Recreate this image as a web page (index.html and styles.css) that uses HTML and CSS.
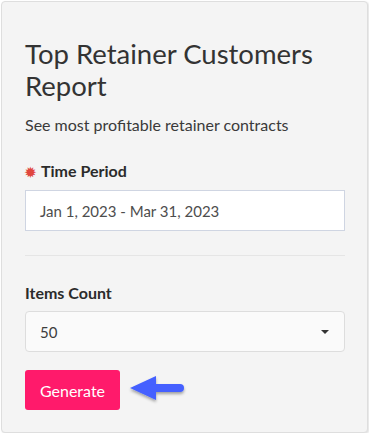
FILE: index.html
```html
<!DOCTYPE html>
<html lang="en">
<head>
    <meta name="viewport" content="width=device-width, initial-scale=1.0" />
    <title>Top Retainer Customers Report</title>
    <link rel="stylesheet" href="styles.css">
</head>
<body>
    <div class="card">
        <h1 class="title">Top Retainer Customers Report</h1>
        <p class="subtitle">See most profitable retainer contracts</p>

        <div class="field">
            <label class="field-label"><span class="required">&#10041;</span>Time Period</label>
            <div class="input-box">Jan 1, 2023 - Mar 31, 2023</div>
        </div>

        <hr class="divider" />

        <div class="field field-count">
            <label class="field-label">Items Count</label>
            <div class="select-box">
                <span>50</span>
                <span class="caret"></span>
            </div>
        </div>

        <div class="actions">
            <button class="btn-generate">Generate</button>
            <!-- pointer arrow -->
            <svg class="pointer" width="60" height="34" viewBox="0 0 60 34">
                <defs>
                    <filter id="shadow" x="-20%" y="-30%" width="140%" height="170%">
                        <feDropShadow dx="0" dy="2" stdDeviation="1.5" flood-color="#000" flood-opacity="0.35" />
                    </filter>
                </defs>
                <g filter="url(#shadow)">
                    <polygon points="3,15 29,3 29,27" fill="#4461ff" />
                    <line x1="27" y1="15" x2="53" y2="15" stroke="#4461ff" stroke-width="8" stroke-linecap="round" />
                </g>
            </svg>
        </div>
    </div>
</body>
</html>
```

FILE: styles.css
```css
* {
    padding: 0;
    margin: 0;
    box-sizing: border-box;
}

body {
    background: #ffffff;
    font-family: "Lato", "Open Sans", sans-serif;
    color: #333333;
}

.card {
    width: 367px;
    height: 432px;
    margin: 1px 0 0 1px;
    background: #f4f4f4;
    border: 1px solid #dedede;
    border-radius: 4px;
    box-shadow: 1px 1px 2px rgba(0, 0, 0, 0.12);
    padding: 36px 22px 0 23px;
}

.title {
    font-size: 27.5px;
    font-weight: 400;
    line-height: 32px;
    color: #333333;
}

.subtitle {
    font-size: 16px;
    line-height: 20px;
    margin-top: 13px;
    color: #3a3a3a;
}

.field {
    margin-top: 26px;
}

.field-count {
    margin-top: 27px;
}

.field-label {
    display: block;
    font-size: 16px;
    font-weight: 700;
    line-height: 20px;
    color: #2b2b2b;
    margin-bottom: 8px;
}

.required {
    color: #e0463e;
    font-size: 13px;
    margin-right: 5px;
}

.input-box {
    height: 41px;
    background: #ffffff;
    border: 1px solid #cfd5e2;
    padding: 0 14px;
    display: flex;
    align-items: center;
    font-size: 15px;
    color: #4d4d4d;
}

.divider {
    border: 0;
    border-top: 1px solid #e5e5e5;
    margin-top: 24px;
}

.select-box {
    height: 41px;
    background: #fafafa;
    border: 1px solid #dddddd;
    border-radius: 4px;
    padding: 0 15px 0 14px;
    display: flex;
    align-items: center;
    justify-content: space-between;
    font-size: 15px;
    color: #3d3d3d;
}

.caret {
    width: 0;
    height: 0;
    border-left: 4px solid transparent;
    border-right: 4px solid transparent;
    border-top: 4px solid #333333;
}

.actions {
    display: flex;
    align-items: center;
    gap: 7px;
    margin-top: 18px;
}

.btn-generate {
    background: #ff1a6b;
    color: #ffffff;
    border: 0;
    border-radius: 3px;
    width: 95px;
    height: 40px;
    font-family: inherit;
    font-size: 16px;
}

.pointer {
    display: block;
}
```
